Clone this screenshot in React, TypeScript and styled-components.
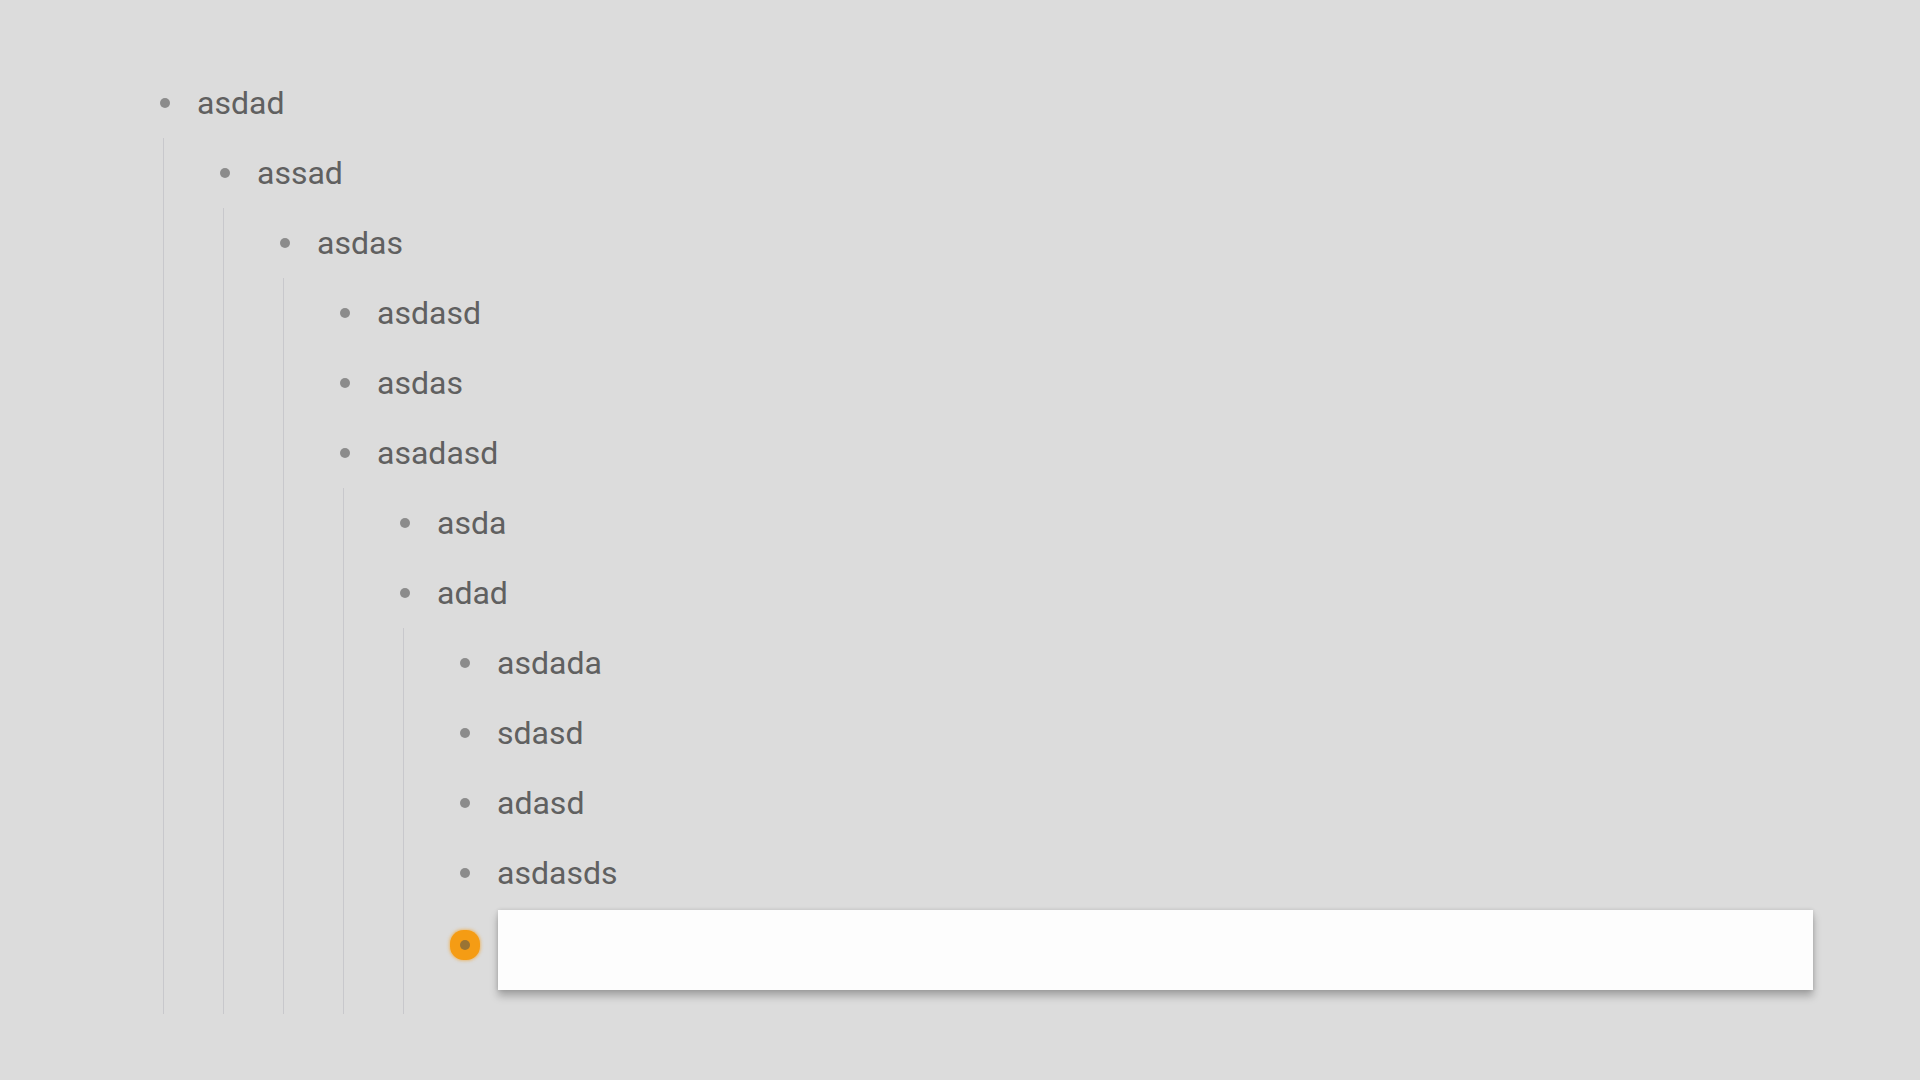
import styled, { createGlobalStyle } from 'styled-components';

interface Item {
    id: string;
    text: string;
    children?: Item[];
}

const tree: Item[] = [
    {
        id: '1',
        text: 'asdad',
        children: [
            {
                id: '1-1',
                text: 'assad',
                children: [
                    {
                        id: '1-1-1',
                        text: 'asdas',
                        children: [
                            { id: 'a', text: 'asdasd' },
                            { id: 'b', text: 'asdas' },
                            {
                                id: 'c',
                                text: 'asadasd',
                                children: [
                                    { id: 'c1', text: 'asda' },
                                    {
                                        id: 'c2',
                                        text: 'adad',
                                        children: [
                                            { id: 'd1', text: 'asdada' },
                                            { id: 'd2', text: 'sdasd' },
                                            { id: 'd3', text: 'adasd' },
                                            { id: 'd4', text: 'asdasds' },
                                        ],
                                    },
                                ],
                            },
                        ],
                    },
                ],
            },
        ],
    },
];

// the new item being typed lives under this node
const EDITING_PARENT = 'c2';

const GlobalStyle = createGlobalStyle`
    html, body {
        margin: 0;
        padding: 0;
        background: #dcdcdc;
        font-family: Roboto, "Liberation Sans", sans-serif;
    }
`;

const Page = styled.div`
    min-height: 1080px;
    box-sizing: border-box;
    padding: 68px 107px 0 150px;
`;

const List = styled.div<{ $nested?: boolean }>`
    display: flex;
    flex-direction: column;
    ${p => p.$nested && `
        margin-left: 13px;
        padding-left: 46px;
        border-left: 1px solid #c8c8cc;
    `}
`;

const Row = styled.div`
    display: flex;
    align-items: center;
    height: 70px;
`;

const BulletSlot = styled.div`
    width: 30px;
    height: 70px;
    flex: none;
    display: flex;
    align-items: center;
    justify-content: center;
`;

const Bullet = styled.span<{ $active?: boolean }>`
    width: 10px;
    height: 10px;
    border-radius: 50%;
    background: ${p => (p.$active ? '#9a7434' : '#8c8c8c')};
    box-shadow: ${p => (p.$active ? '0 0 0 10px #f59c14, 0 0 3px 11px rgba(245, 156, 20, 0.5)' : 'none')};
`;

const Label = styled.span`
    margin-left: 17px;
    font-size: 32px;
    color: #606060;
    line-height: 1;
`;

const InputRow = styled.div`
    display: flex;
    align-items: flex-start;
    padding: 2px 0 24px;
`;

const Editor = styled.input`
    flex: 1;
    margin-left: 18px;
    height: 80px;
    box-sizing: border-box;
    border: none;
    outline: none;
    background: #fdfdfd;
    padding: 0 16px;
    font-family: Roboto, "Liberation Sans", sans-serif;
    font-size: 32px;
    color: #555;
    box-shadow: 0 6px 8px rgba(0, 0, 0, 0.26), 0 0 4px rgba(0, 0, 0, 0.12);
`;

const Node = ({ item }: { item: Item }) => {
    const hasKids = (item.children && item.children.length > 0) || item.id === EDITING_PARENT;
    return (
        <>
            <Row>
                <BulletSlot>
                    <Bullet />
                </BulletSlot>
                <Label>{item.text}</Label>
            </Row>
            {hasKids && (
                <List $nested>
                    {item.children?.map(c => <Node key={c.id} item={c} />)}
                    {item.id === EDITING_PARENT && (
                        <InputRow>
                            <BulletSlot>
                                <Bullet $active />
                            </BulletSlot>
                            <Editor autoFocus />
                        </InputRow>
                    )}
                </List>
            )}
        </>
    );
};

export default function App() {
    return (
        <>
            <GlobalStyle />
            <Page>
                <List>
                    {tree.map(t => <Node key={t.id} item={t} />)}
                </List>
            </Page>
        </>
    );
}
